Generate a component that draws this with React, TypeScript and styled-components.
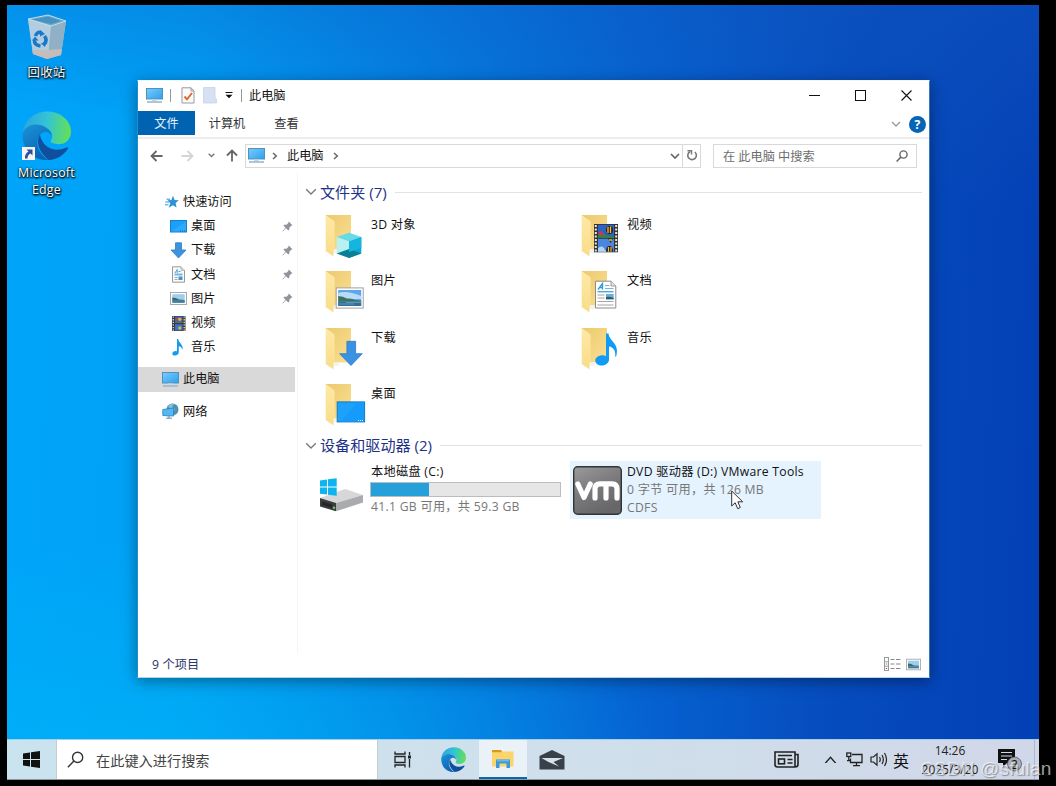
import React from 'react';
import styled, { createGlobalStyle } from 'styled-components';

const GlobalStyle = createGlobalStyle`
  * {
    box-sizing: border-box;
  }
  body {
    margin: 0;
    background: #000;
    font-family: 'Open Sans', 'Noto Sans CJK SC', sans-serif;
    font-size: 12.2px;
    color: #111;
  }
  svg {
    display: block;
    flex: none;
  }
`;

/* ---------- icons ---------- */

const BinIcon = () => (
  <svg width="42" height="46" viewBox="0 0 42 46">
    <path d="M2 5 L22 1 L40 7 L35 41 L21 45 L7 40Z" fill="#a9c9de" opacity=".9" />
    <path d="M2 5 L22 1 L40 7 L25 12Z" fill="#6fa9cc" />
    <path d="M6 5.5 L22 2.5 L35 7 L25 10Z" fill="#4593c2" />
    <path d="M2 5 L25 12 L22 44 L7 40Z" fill="#b2cddf" />
    <path d="M25 12 L40 7 L35 41 L22 44Z" fill="#8fb0c5" />
    <path d="M6.4 36 L22.5 36 L35.7 35 L35 41 L21 45 L7 40Z" fill="#c5bdbb" />
    <path d="M2 5 L22 1 L40 7 L25 12Z" fill="none" stroke="#d3e3ec" strokeWidth=".8" />
    <g fill="none" stroke="#1a78c8" strokeWidth="3.6">
      <path d="M9.5 22 Q11 17 15.5 19" />
      <path d="M18.5 22 Q21.5 26 18.5 30" />
      <path d="M14.5 32 Q8 31 8.5 26" />
    </g>
    <path d="M14 16 l5 4 -5 2.5z M21 27 l-2 6 -4 -3.5z M6 26.5 l3 -4 3.5 4z" fill="#1a78c8" />
  </svg>
);

const EdgeIcon = ({ size }: { size: number }) => (
  <svg width={size} height={size} viewBox="0 0 48 48">
    <defs>
      <linearGradient id="edgeTop" x1="0" y1=".4" x2="1" y2=".5">
        <stop offset="0" stopColor="#2aa5df" />
        <stop offset=".5" stopColor="#35c3d5" />
        <stop offset=".78" stopColor="#4fd58a" />
        <stop offset="1" stopColor="#65de58" />
      </linearGradient>
      <linearGradient id="edgeMid" x1="0" y1="0" x2=".5" y2="1">
        <stop offset="0" stopColor="#1b93d8" />
        <stop offset="1" stopColor="#0a63b4" />
      </linearGradient>
    </defs>
    <path
      d="M.5 22 C2 9 12 .5 25 .5 C38 .5 48 10 48 20 C48 28 42 32.500 36 32.500 C31 32.500 27.500 31 28 29.500 C31 26 30 20 24 17 C16 11 5 13 .5 22Z"
      fill="url(#edgeTop)"
    />
    <path
      d="M.5 22 C4 13 15 11 23 16 C27 18.500 29 21 29 24 C26 19.500 21 19 17 24 C12 32 17 43 26 48 C12 49 0 39 .5 22Z"
      fill="url(#edgeMid)"
    />
    <path
      d="M17.500 23 C14 29 15 39 26 48 C34 48 41 43 45 37 C45.500 35.500 44.500 35.500 43 36 C32 41 20 36 17.500 23Z"
      fill="#114f9e"
    />
  </svg>
);

const ShortcutArrow = () => (
  <svg width="13" height="13" viewBox="0 0 13 13">
    <rect width="13" height="13" fill="#f4f4f4" />
    <path d="M4.500 2.500 H10.500 V8.500 L8.500 6.500 C6.500 7.500 5.500 9 5.500 11.500 H3 C2.600 8.500 4 6 6.500 4.500Z" fill="#2b4f9c" />
  </svg>
);

const PcIcon = () => (
  <svg width="17" height="17" viewBox="0 0 17 17">
    <defs>
      <linearGradient id="pcScreen" x1="0" y1="0" x2="1" y2="1">
        <stop offset="0" stopColor="#7ccbfb" />
        <stop offset="1" stopColor="#2da0ee" />
      </linearGradient>
    </defs>
    <rect x=".5" y="1.500" width="16" height="10.500" fill="url(#pcScreen)" stroke="#4e93bd" />
    <rect x="6" y="12.500" width="5" height="2" fill="#c9d9e3" />
    <rect x="1" y="14.200" width="15" height="1.600" fill="#9db8ca" />
  </svg>
);

const CheckPageIcon = () => (
  <svg width="14" height="17" viewBox="0 0 14 17">
    <path d="M1 .8 H10 L13 4 V16 H1Z" fill="#fbfbfb" stroke="#999" />
    <path d="M10 .8 V4 H13" fill="none" stroke="#999" />
    <path d="M3.500 9.500 L6 12.300 L11 6" fill="none" stroke="#e0662a" strokeWidth="1.900" />
  </svg>
);

const BlankFolderIcon = () => (
  <svg width="14" height="17" viewBox="0 0 14 17">
    <path d="M.5 .5 H12 V11 L13.500 12 V16 H.5Z" fill="#d6e2f3" stroke="#c5d4ea" strokeWidth=".8" />
  </svg>
);

const StarIcon = () => (
  <svg width="14" height="14" viewBox="0 0 14 14">
    <path d="M8 .8 L9.600 4.900 L13.800 5.200 L10.600 8 L11.600 12.500 L7.900 10.200 L3.600 12.800 L5.300 8.300 L2.600 5.200 L6.400 4.900Z" fill="#2b93dc" />
    <path d="M1.500 4.200 H5 M.3 7 H4 M0 9.800 H3.500" stroke="#2b93dc" strokeWidth="1" />
  </svg>
);

const DesktopIcon = () => (
  <svg width="17" height="17" viewBox="0 0 17 17">
    <rect x=".5" y="2.500" width="16" height="11.500" fill="#18a0fb" stroke="#157fc9" />
    <path d="M1 13.500 L16 3.500 V13.500Z" fill="#3bb0ff" opacity=".6" />
    <path d="M10 13 H16" stroke="#0d6cb3" strokeDasharray="1 1" />
  </svg>
);

const DownIcon = () => (
  <svg width="17" height="17" viewBox="0 0 17 17">
    <path d="M5.500 .8 H11.500 V8 H16 L8.500 16 L1 8 H5.500Z" fill="#3f93de" stroke="#2c7fc8" strokeWidth=".8" />
  </svg>
);

const DocIcon = () => (
  <svg width="17" height="17" viewBox="0 0 17 17">
    <path d="M2.500 .8 H11 L14.500 4.300 V16.200 H2.500Z" fill="#fafafa" stroke="#999" />
    <path d="M11 .8 V4.300 H14.500" fill="#ddd" stroke="#aaa" strokeWidth=".8" />
    <path d="M5 7 L7.200 3.500 V7 M8.500 5.500 H10.500" stroke="#4ba6d8" fill="none" />
    <rect x="4.500" y="7.500" width="8" height="2" fill="#6cbbe5" />
    <path d="M4.500 11.500 H7.500 M4.500 13.500 H7.500" stroke="#aaa" />
    <rect x="8.500" y="10.500" width="4" height="3.500" fill="#4a92c6" />
  </svg>
);

const PhotoIcon = ({ width = 17, height = 17 }: { width?: number; height?: number }) => (
  <svg width={width} height={height} viewBox="0 0 17 17">
    <rect x=".5" y="2.500" width="16" height="12" fill="#fdfdfd" stroke="#a9a9a9" />
    <rect x="2.300" y="4.200" width="12.400" height="8.600" fill="#9dcdf0" />
    <path d="M2.300 7.500 Q6 7.500 9 9.500 L14.700 10 V10.800 H2.300Z" fill="#3b6c5a" />
    <rect x="2.300" y="10.800" width="12.400" height="2" fill="#3f7ba6" />
  </svg>
);

const FilmIcon = () => (
  <svg width="17" height="17" viewBox="0 0 17 17">
    <rect x="2" y="1" width="13.500" height="15" fill="#3a3a3a" />
    <path d="M3.300 1.500 V16 M14.200 1.500 V16" stroke="#ddd" strokeWidth="1.300" strokeDasharray="1.300 1.300" />
    <rect x="5" y="1.500" width="7.500" height="6.500" fill="#3e62b8" />
    <rect x="5" y="9.200" width="7.500" height="6.300" fill="#3f6fd0" />
    <path d="M5 5 L8 3 V6Z" fill="#c33f55" />
    <circle cx="9.800" cy="4.300" r="1.700" fill="#e2b52f" />
    <path d="M5.500 7.300 H12" stroke="#4c8b46" />
    <circle cx="9.800" cy="13" r="1.700" fill="#d6b238" />
  </svg>
);

const NoteIcon = () => (
  <svg width="17" height="17" viewBox="0 0 17 17">
    <path d="M7 0 H8.300 C8.600 4 13.800 5.500 12.500 11 C12 8.500 10.500 7.500 8.800 7.200 V13.300 C8.500 16 6 17 4 16.500 C1.700 16 1.800 12.900 4.500 12.200 Q6 11.700 7 12.300Z" fill="#149bea" />
  </svg>
);

const NetworkIcon = () => (
  <svg width="17" height="17" viewBox="0 0 17 17">
    <circle cx="10.500" cy="6.500" r="6" fill="#4f8fb2" />
    <path d="M6 3 Q9 0 12 1 L10 4 L13 6 L12 8 L8 6Z" fill="#86bfd6" />
    <path d="M.8 6.500 L11.500 5 V13 L.8 12.500Z" fill="#54b8f5" stroke="#2a80bd" strokeWidth=".8" />
    <path d="M5.500 13 H8 V14.600 H10 V16 H4 V14.800 H5.500Z" fill="#8fb3c9" />
  </svg>
);

const PinIcon = () => (
  <svg width="11" height="11" viewBox="0 0 11 11">
    <path d="M6.700 .5 L10.500 4.300 L9.300 4.700 L7.500 6.500 L7.200 8.800 L6.300 9.400 L4 7.200 L.8 10.500 L.4 10.200 L3.500 6.700 L1.500 4.600 L2.200 3.800 L4.500 3.700 L6.300 1.900Z" fill="#8c959d" />
  </svg>
);

const Chevron = ({ width = 10, color = '#555', d = 'M1 1 L5 5 L9 1', stroke = 1.3 }) => (
  <svg width={width} height={width * 0.6} viewBox="0 0 10 6">
    <path d={d} fill="none" stroke={color} strokeWidth={stroke} />
  </svg>
);

const CrumbArrow = () => (
  <svg width="6" height="8" viewBox="0 0 6 8">
    <path d="M1 1 L4.300 4 L1 7" fill="none" stroke="#666" strokeWidth="1.500" />
  </svg>
);

const NavArrow = ({ color, turn = 0 }: { color: string; turn?: number }) => (
  <svg width="14" height="14" viewBox="0 0 14 14">
    <path
      d="M12.500 7 H1.500 M6.500 2 L1.500 7 L6.500 12"
      transform={`rotate(${turn} 7 7)`}
      fill="none"
      stroke={color}
      strokeWidth="1.800"
    />
  </svg>
);

const SearchIcon = ({ size, color, width }: { size: number; color: string; width: number }) => (
  <svg width={size} height={size} viewBox="0 0 16 16">
    <circle cx="10" cy="6" r="4.800" fill="none" stroke={color} strokeWidth={width} />
    <path d="M6.500 9.500 L.8 15.200" stroke={color} strokeWidth={width} />
  </svg>
);

const RefreshIcon = () => (
  <svg width="12" height="13" viewBox="0 0 12 13">
    <path d="M8.800 3 A4.300 4.300 0 1 1 3.800 2.700" fill="none" stroke="#777" strokeWidth="1.600" />
    <path d="M1.500 1.700 H5.500 V5.500" fill="none" stroke="#777" strokeWidth="1.500" />
  </svg>
);

// Overlays share the 48px grid of the folder behind them.
const overlays: Record<string, React.ReactNode> = {
  cube: (
    <>
      <path d="M30 20.700 L42.300 25 L30 29.500 L17.700 25Z" fill="#65dbe6" />
      <path d="M17.700 25 L30 29.500 V46 L17.700 41.500Z" fill="#b9f0f2" />
      <path d="M42.300 25 L30 29.500 V46 L42.300 41.500Z" fill="#0aa6d4" />
      <path d="M17.700 41.500 L30 37 L42.300 41.500 L30 46Z" fill="#0a7f95" />
      <path d="M30 29.500 L42.300 25 V36 L30 40Z" fill="#16b5de" />
    </>
  ),
  photo: (
    <>
      <rect x="17.200" y="19.900" width="27" height="20.200" fill="#fff" stroke="#a0a0a0" />
      <rect x="19.200" y="22" width="23" height="16" fill="#5da6ec" />
      <path d="M19.200 25 Q27 22 42.200 28 V31 H19.200Z" fill="#b8dcf8" />
      <path d="M19.200 28 Q24 28 28 30.500 Q34 30 36 32 L42.200 32.500 V33.500 H19.200Z" fill="#3c7558" />
      <rect x="19.200" y="33.500" width="23" height="4.500" fill="#346e98" />
      <path d="M20 36 H35 M27 34.500 H42" stroke="#75a9c8" strokeWidth=".7" />
    </>
  ),
  down: <path d="M27.900 16.300 H36.600 V28.700 H43.300 L32 40.500 L20.600 28.700 H27.900Z" fill="#3b92e3" stroke="#2b7cc9" strokeWidth=".8" />,
  desktop: (
    <>
      <rect x="18.200" y="20.900" width="27.400" height="20" fill="#1ca2fc" stroke="#1678bd" />
      <path d="M22 40.400 L38 21.400 H45 V40.400Z" fill="#149bfb" />
      <path d="M39 39.500 H45" stroke="#d9f0ff" strokeDasharray="1 1" />
    </>
  ),
  film: (
    <>
      <rect x="19" y="12" width="24" height="28.300" fill="#333" />
      <path d="M20.800 13 V40 M41.200 13 V40" stroke="#e8e8e8" strokeWidth="2" strokeDasharray="2 1.500" />
      <rect x="23" y="12.800" width="16" height="13" fill="#2c62c6" />
      <rect x="23" y="26.800" width="16" height="13" fill="#4a86e2" />
      <path d="M23 23 L26 20 L31 23.500 L39 24 V25.800 H23Z" fill="#2f8a3c" />
      <path d="M23 21 L26 19 L30 23 H24Z" fill="#cf3750" />
      <ellipse cx="34.500" cy="18" rx="3.500" ry="4" fill="#2b1c28" />
      <path d="M33 15 V21 M35.500 14.500 V21" stroke="#f3c51d" strokeWidth="1.300" />
      <path d="M33 26.500 H38 L35.500 31Z" fill="#2e2029" />
      <path d="M34 28 H37" stroke="#edc323" strokeWidth="1.500" />
      <path d="M23 36 Q28 32 30 38 L33 39.800 H23Z" fill="#b5d4ee" />
      <path d="M31 39.800 Q31 34 34.500 34 Q38 34 38 39.800Z" fill="#2b1c28" />
      <path d="M33.500 35 V39.800 M36 35 V39.800" stroke="#f3c51d" strokeWidth="1.200" />
    </>
  ),
  doc: (
    <>
      <path d="M20.500 13.200 H36 L40.800 18 V40 H20.500Z" fill="#fff" stroke="#8c8c8c" />
      <path d="M36 13.200 V18 H40.800" fill="#e4e4e4" stroke="#8c8c8c" strokeWidth=".8" />
      <path d="M23 21.500 L27.500 15.500 V21.500 M24.800 19.500 H27.500" fill="none" stroke="#3b9bd1" strokeWidth="1.400" />
      <path d="M30 17.500 H34.500 M30 20.500 H38.500" stroke="#6dbbe3" strokeWidth="1.200" />
      <path d="M22.500 23.700 H38.500" stroke="#51a9dc" strokeWidth="1.400" />
      <path d="M22.500 27 H29.500 M22.500 30 H29.500 M22.500 33.500 H38.500 M22.500 37 H38.500" stroke="#a6a6a6" />
      <rect x="31" y="26" width="7.700" height="5.300" fill="#69aede" />
      <path d="M31 29 Q34 28 38.700 30 V31.300 H31Z" fill="#2e5f60" />
    </>
  ),
  note: (
    <path
      d="M31 8.500 H33.500 C34 16 44.500 18 41.500 30.500 L40 32 C41.500 26 38 22 34 21.500 V35 C33.700 38.500 30 40.500 26.500 40.500 C22.500 40.500 20.300 38 20.300 35.500 C20.300 32.500 24 30.300 27.500 30.300 C29 30.300 30.200 30.600 31 31.200Z"
      fill="#129bf4"
    />
  ),
};

const FolderIcon = ({ kind }: { kind: string }) => (
  <svg width="48" height="48" viewBox="0 0 48 48">
    <defs>
      <linearGradient id="folderBack" x1="0" y1="0" x2="1" y2="1">
        <stop offset="0" stopColor="#ebc96d" />
        <stop offset="1" stopColor="#fbdf92" />
      </linearGradient>
      <linearGradient id="folderFlap" x1="0" y1="0" x2="0" y2="1">
        <stop offset="0" stopColor="#ffe9a6" />
        <stop offset="1" stopColor="#f8dc89" />
      </linearGradient>
    </defs>
    <path d="M6.700 3 H32 V37.500 H15Z" fill="url(#folderBack)" />
    <path d="M12 37.500 H20 V41 H14Z" fill="#f2f2f2" />
    <path d="M6.700 3 L14.500 8.500 C15.500 9.500 15.700 10 15.700 11 V36.500 L14.500 38 V43.500 L13.800 44 L6.700 39Z" fill="url(#folderFlap)" />
    {overlays[kind]}
  </svg>
);

const DriveIcon = () => (
  <svg width="48" height="48" viewBox="0 0 48 48">
    <path d="M1 32 L26 23 L44 29 L17 37Z" fill="#d6d7d9" />
    <path d="M17 37 L44 29 V36.500 L17 45.300Z" fill="#a9abae" />
    <path d="M1 32 L17 37 V45.300 L1 40.500Z" fill="#3a3b3d" />
    <path d="M3 35.500 L13 38.500 V42 L3 39Z" fill="#242526" />
    <circle cx="15" cy="41.800" r="1.200" fill="#5fd35c" />
    <path d="M1 14.500 L8 13.500 V20.500 H1Z M9 13.300 L17.700 12.200 V20.500 H9Z M1 21.500 H8 V28.500 L1 27.700Z M9 21.500 H17.700 V29.800 L9 28.700Z" fill="#0cb4f0" />
  </svg>
);

const VmIcon = () => (
  <svg width="49" height="49" viewBox="0 0 49 49">
    <defs>
      <linearGradient id="vmPlate" x1="0" y1="0" x2=".5" y2="1">
        <stop offset="0" stopColor="#9b9b9d" />
        <stop offset=".5" stopColor="#7c7c7e" />
        <stop offset="1" stopColor="#676769" />
      </linearGradient>
    </defs>
    <rect x=".7" y=".7" width="47.600" height="47.600" rx="4" fill="url(#vmPlate)" stroke="#343436" strokeWidth="1.400" />
    <path
      d="M4.800 18 L11 31.500 L17.300 18 M22 32 V23 Q22 17.800 27 17.800 H39 Q44 17.800 44 23 V32 M33 18.500 V32"
      fill="none"
      stroke="#fff"
      strokeWidth="5.200"
      strokeLinecap="round"
      strokeLinejoin="round"
    />
  </svg>
);

const WindowsIcon = () => (
  <svg width="17" height="17" viewBox="0 0 17 17">
    <path d="M0 2.400 L7 1.400 V8 H0Z M8 1.200 L17 0 V8 H8Z M0 9 H7 V15.600 L0 14.600Z M8 9 H17 V17 L8 15.800Z" fill="#111" />
  </svg>
);

const TaskViewIcon = () => (
  <svg width="17" height="17" viewBox="0 0 17 17">
    <g fill="none" stroke="#222" strokeWidth="1.300">
      <path d="M1 .5 V3 H11 V.5 M1 16.500 V14 H11 V16.500 M1 5.500 H11 V11.500 H1Z M15.500 1 V4 M15.500 8 V16.500" />
    </g>
    <rect x="14" y="4.500" width="3" height="3" fill="#222" />
  </svg>
);

const ExplorerIcon = () => (
  <svg width="22" height="20" viewBox="0 0 22 20">
    <path d="M0 1 H9 L10.500 2.500 H21.500 V17.500 H0Z" fill="#fcd56a" />
    <path d="M0 1 H9 L10 3.300 H0Z" fill="#d99a17" />
    <path d="M4 10.500 H18 V19 H14.500 V14.500 H7.500 V19 H4Z" fill="#3d97d9" />
    <path d="M4 10.500 H18 L16.500 12.500 H5.500Z" fill="#6bb6ea" />
  </svg>
);

const MailIcon = () => (
  <svg width="26" height="20" viewBox="0 0 26 20">
    <path d="M.5 6 L13 0 L25.500 6 V19.500 H.5Z" fill="#38414a" />
    <path d="M2.500 8 H24 L14.500 12 L20 16.500 L9.500 12Z" fill="#d7e3ec" />
  </svg>
);

const NewsIcon = () => (
  <svg width="25" height="17" viewBox="0 0 25 17">
    <g fill="none" stroke="#222" strokeWidth="1.600">
      <path d="M1 1 H21 V16 H3.500 Q1 16 1 13.500Z M21 3.500 H24 V13.500 Q24 16 21 16" />
      <path d="M4 4.500 H18 M13.500 8.500 H18.500 M13.500 12 H18.500" />
      <rect x="4.500" y="8" width="6" height="4.800" />
    </g>
  </svg>
);

const TrayNetIcon = () => (
  <svg width="17" height="15" viewBox="0 0 17 15">
    <g fill="none" stroke="#222" strokeWidth="1.300">
      <path d="M6 2.500 H16 V10.500 H4.500 V6.500 M10.500 10.500 V13.500 M7 13.700 H14" />
      <rect x=".8" y="1" width="4" height="3.500" />
      <path d="M2.800 4.500 V8.500 M1 8.700 H4" />
    </g>
  </svg>
);

const VolumeIcon = () => (
  <svg width="18" height="15" viewBox="0 0 18 15">
    <g fill="none" stroke="#222" strokeWidth="1.200">
      <path d="M1 5 H3.500 L7 1.800 V13.200 L3.500 10 H1Z M9.500 5 Q11 7.500 9.500 10 M12 3 Q14.700 7.500 12 12 M14.500 1 Q18.500 7.500 14.500 14" />
    </g>
  </svg>
);

const ActionIcon = () => (
  <svg width="24" height="24" viewBox="0 0 24 24">
    <path d="M0 1 H17 V15 H9 L5 19 V15 H0Z" fill="#111" />
    <path d="M3 4.500 H14 M3 8 H14 M3 11.500 H9" stroke="#cfd8e8" strokeWidth="1.200" />
    <circle cx="16.500" cy="16" r="7" fill="#a8adb8" stroke="#555b66" strokeWidth=".8" />
    <text x="13" y="20.500" fontSize="12" fill="#111">
      2
    </text>
  </svg>
);

const DetailsViewIcon = () => (
  <svg width="17" height="14" viewBox="0 0 17 14">
    <rect x=".5" y=".5" width="4" height="13" fill="#fff" stroke="#999" />
    <path d="M.5 4.800 H4.500 M.5 9.200 H4.500" stroke="#999" />
    <path d="M1.800 7 H3.200" stroke="#4b87c9" />
    <path d="M1.800 11.500 H3.200" stroke="#c33" />
    <path d="M6.500 2.500 H10.500 M12 2.500 H16.500 M6.500 7 H10.500 M12 7 H16.500 M6.500 11.500 H10.500 M12 11.500 H16.500" stroke="#888" />
  </svg>
);

const CursorIcon = () => (
  <svg width="13" height="20" viewBox="0 0 13 20">
    <path d="M.7 1 V16 L4.200 12.800 L6.700 18.700 L9.300 17.500 L6.800 11.800 H11.700Z" fill="#fff" stroke="#333" strokeWidth="1" />
  </svg>
);

/* ---------- layout ---------- */

const Screen = styled.div`
  position: relative;
  width: 1056px;
  height: 786px;
  padding: 5px 17px 7px 7px;
  overflow: hidden;
  background: #000;
`;

const Desktop = styled.div`
  position: relative;
  display: flex;
  flex-direction: column;
  width: 1032px;
  height: 774px;
  background:
    radial-gradient(ellipse 560px 240px at 10% 100%, rgba(0, 180, 245, 0.7), rgba(0, 180, 245, 0)),
    linear-gradient(186deg, rgba(16, 84, 190, 0.5), rgba(0, 90, 200, 0) 24%),
    linear-gradient(92deg, #00a5fa 0%, #00a0f5 18%, #0385e6 38%, #0565d3 60%, #064cbe 80%, #033fb5 100%);
`;

const Shortcuts = styled.div`
  flex: 1;
  display: flex;
  flex-direction: column;
  align-items: center;
  width: 79px;
  padding-top: 9px;
`;

const Shortcut = styled.div<{ $gap: number }>`
  display: flex;
  flex-direction: column;
  align-items: center;
  margin-bottom: ${({ $gap }) => $gap}px;
  color: #fff;
  font-size: 12.4px;
  letter-spacing: 0.25px;
  line-height: 17px;
  text-align: center;
  text-shadow: 0 1px 2px #000, 1px 1px 2px #000, 0 0 2px rgba(0, 0, 0, 0.7);
  & > span {
    margin-top: 4px;
  }
`;

const IconWithBadge = styled.div`
  position: relative;
  & > svg + svg {
    position: absolute;
    left: 0;
    bottom: 0;
  }
`;

const Window = styled.div`
  position: absolute;
  left: 130px;
  top: 75px;
  display: flex;
  flex-direction: column;
  width: 793px;
  height: 598px;
  background: #fff;
  border: 1px solid #1d8fd4;
  border-top-color: #eef6fc;
  border-right-color: #3c78bd;
  border-bottom-color: #b5d2ea;
  box-shadow: 0 3px 14px rgba(0, 0, 0, 0.4);
`;

const TitleBar = styled.div`
  display: flex;
  align-items: center;
  height: 30px;
  padding: 0 0 2px 8px;
`;

const TitleMark = styled.i<{ $left: number; $right: number }>`
  width: 1px;
  height: 13px;
  margin: 0 ${({ $right }) => $right}px 0 ${({ $left }) => $left}px;
  background: #999;
`;

const QuickTools = styled.div`
  display: flex;
  align-items: center;
  gap: 8px;
`;

const WindowButtons = styled.div`
  display: flex;
  margin-left: auto;
`;

const WindowButton = styled.div`
  display: flex;
  align-items: center;
  justify-content: center;
  width: 46px;
  height: 28px;
`;

const TabBar = styled.div`
  display: flex;
  align-items: center;
  height: 28px;
  padding: 0 3px 3px 0;
  border-bottom: 2px solid #ececec;
`;

const Tab = styled.div<{ $active?: boolean; $width: number }>`
  width: ${({ $width }) => $width}px;
  height: 24px;
  line-height: 26px;
  text-align: center;
  color: ${({ $active }) => ($active ? '#e6f2fc' : '#333')};
  background: ${({ $active }) => ($active ? '#0063b1' : 'none')};
`;

const TabTools = styled.div`
  display: flex;
  align-items: center;
  gap: 8px;
  margin: 3px 0 0 auto;
`;

const HelpBadge = styled.div`
  width: 17px;
  height: 17px;
  border-radius: 50%;
  background: #0765b8;
  color: #fff;
  font-weight: 700;
  line-height: 17px;
  text-align: center;
`;

const AddressRow = styled.div`
  display: flex;
  align-items: center;
  height: 34px;
  padding: 0 12px 1px;
`;

const NavButtons = styled.div`
  display: flex;
  align-items: center;
  width: 95px;
  & > :nth-child(2) {
    margin-left: 16px;
  }
  & > :nth-child(3) {
    margin-left: 14px;
  }
  & > :nth-child(4) {
    margin-left: 10px;
  }
`;

const AddressBox = styled.div`
  display: flex;
  align-items: center;
  width: 456px;
  height: 24px;
  padding-left: 2px;
  border: 1px solid #d9d9d9;
  & > span {
    margin: -1px 9px 0;
  }
  & > svg + svg {
    margin-left: 7px;
  }
`;

const AddressTools = styled.div`
  display: flex;
  align-items: center;
  height: 100%;
  margin-left: auto;
`;

const RefreshCell = styled.div`
  display: flex;
  align-items: center;
  justify-content: center;
  width: 18px;
  height: 100%;
  margin-left: 2px;
  border-left: 1px solid #d9d9d9;
`;

const SearchBox = styled.div`
  display: flex;
  align-items: center;
  justify-content: space-between;
  width: 204px;
  height: 24px;
  margin-left: 12px;
  padding: 0 8px 0 9px;
  border: 1px solid #d9d9d9;
  color: #6d6d6d;
`;

const Body = styled.div`
  flex: 1;
  display: flex;
  min-height: 0;
`;

const Sidebar = styled.div`
  width: 160px;
  padding-top: 17px;
  border-right: 1px solid #f5f5f5;
`;

const SideRow = styled.div<{ $indent: number; $top?: number; $active?: boolean }>`
  display: flex;
  align-items: center;
  gap: 4px;
  width: 157px;
  height: 24.2px;
  margin-top: ${({ $top = 0 }) => $top}px;
  padding: 0 2px 0 ${({ $indent }) => $indent}px;
  background: ${({ $active }) => ($active ? '#d9d9d9' : 'none')};
  line-height: 24px;
  & > svg:nth-child(3) {
    margin-left: auto;
  }
`;

const Content = styled.div`
  flex: 1;
  padding: 8px 7px 0 7px;
`;

const GroupHeader = styled.div`
  display: flex;
  align-items: center;
  gap: 3px;
  height: 22px;
  color: #1e3287;
  font-size: 15.1px;
  line-height: 22px;
  white-space: nowrap;
  &::after {
    content: '';
    flex: 1;
    height: 1px;
    margin-left: 5px;
    background: #e2e2e2;
  }
`;

const TileGrid = styled.div<{ $top: number; $bottom: number; $row: number }>`
  display: grid;
  grid-template-columns: 251px 251px;
  grid-auto-rows: ${({ $row }) => $row}px;
  column-gap: 5px;
  margin: ${({ $top, $bottom }) => `${$top}px 0 ${$bottom}px`};
  padding-left: 9px;
`;

const Tile = styled.div<{ $hover?: boolean; $dense?: boolean }>`
  position: relative;
  display: flex;
  gap: 5px;
  padding: ${({ $dense }) => ($dense ? '5px 3px 0' : '4px 3px 0')};
  background: ${({ $hover }) => ($hover ? '#e5f3ff' : 'none')};
  letter-spacing: 0.28px;
  line-height: 18px;
  white-space: nowrap;
`;

const TileIcon = styled.div<{ $inset?: number }>`
  width: 49px;
  padding-left: ${({ $inset = 0 }) => $inset}px;
`;

const TileText = styled.div<{ $top: number }>`
  display: flex;
  flex-direction: column;
  margin-top: ${({ $top }) => $top}px;
`;

const Muted = styled.span`
  color: #777;
`;

const UsageBar = styled.div`
  width: 191px;
  height: 15px;
  margin: 1px 0 1px -1px;
  border: 1px solid #bcbcbc;
  background: #e6e6e6;
`;

const UsageFill = styled.div`
  height: 100%;
  background: #26a0da;
`;

const Pointer = styled.div`
  position: absolute;
  left: 161px;
  top: 29px;
`;

const StatusBar = styled.div`
  display: flex;
  align-items: center;
  justify-content: space-between;
  height: 24px;
  padding: 0 8px 2px 14px;
  color: #2c3566;
  letter-spacing: 0.15px;
`;

const StatusViews = styled.div`
  display: flex;
  align-items: center;
  gap: 5px;
`;

const Taskbar = styled.div`
  display: flex;
  align-items: center;
  height: 41px;
  margin-bottom: -1px;
  border-top: 1px solid #a5cdec;
  border-bottom: 1px solid #8f979e;
  background: linear-gradient(90deg, #c9e3ef, #cfe0ec 50%, #d0d7e8);
`;

const TaskButton = styled.div<{ $width: number; $active?: boolean }>`
  display: flex;
  align-items: center;
  justify-content: center;
  width: ${({ $width }) => $width}px;
  height: 100%;
  background: ${({ $active }) => ($active ? '#eaf1f7' : 'none')};
  border-bottom: ${({ $active }) => ($active ? '2px solid #0a68b0' : 'none')};
`;

const TaskSearch = styled.div`
  display: flex;
  align-items: center;
  gap: 12px;
  width: 322px;
  height: 100%;
  padding-left: 10px;
  background: #fff;
  border-left: 1px solid #c5cdd2;
  border-right: 1px solid #c5cdd2;
  color: #444;
  font-size: 14.2px;
`;

const Tray = styled.div`
  display: flex;
  align-items: center;
  height: 100%;
  margin-left: auto;
`;

const TrayItem = styled.div<{ $right: number }>`
  margin-right: ${({ $right }) => $right}px;
  font-size: 16px;
`;

const Clock = styled.div`
  width: 62px;
  margin-right: 17px;
  color: #222;
  font-size: 12px;
  line-height: 19px;
  text-align: center;
`;

const ShowDesktop = styled.div`
  width: 5px;
  height: 100%;
  margin-left: 12px;
  border-left: 1px solid #aeb9cc;
`;

const Watermark = styled.div`
  position: absolute;
  left: 920px;
  top: 757px;
  color: rgba(255, 255, 255, 0.62);
  font-family: 'Liberation Sans', sans-serif;
  font-size: 19px;
  line-height: 24px;
  letter-spacing: 0.2px;
  text-shadow: 1px 1px 1px rgba(0, 0, 0, 0.35);
  white-space: nowrap;
`;

/* ---------- data ---------- */

const quickLinks = [
  { label: '桌面', icon: <DesktopIcon />, pinned: true },
  { label: '下载', icon: <DownIcon />, pinned: true },
  { label: '文档', icon: <DocIcon />, pinned: true },
  { label: '图片', icon: <PhotoIcon />, pinned: true },
  { label: '视频', icon: <FilmIcon />, pinned: false },
  { label: '音乐', icon: <NoteIcon />, pinned: false },
];

const folders = [
  { label: '3D 对象', kind: 'cube' },
  { label: '视频', kind: 'film' },
  { label: '图片', kind: 'photo' },
  { label: '文档', kind: 'doc' },
  { label: '下载', kind: 'down' },
  { label: '音乐', kind: 'note' },
  { label: '桌面', kind: 'desktop' },
];

const drive = { free: 41.1, total: 59.3 };

const ExplorerWindow = () => (
  <Window>
    <TitleBar>
      <PcIcon />
      <TitleMark $left={7} $right={10} />
      <QuickTools>
        <CheckPageIcon />
        <BlankFolderIcon />
        <svg width="8" height="8" viewBox="0 0 8 8">
          <path d="M.5 1.500 H7.500" stroke="#111" />
          <path d="M.5 3.700 H7.500 L4 7.300Z" fill="#111" />
        </svg>
      </QuickTools>
      <TitleMark $left={8} $right={7} />
      <span>此电脑</span>
      <WindowButtons>
        <WindowButton>
          <svg width="11" height="11" viewBox="0 0 11 11">
            <path d="M0 5.500 H11" stroke="#111" />
          </svg>
        </WindowButton>
        <WindowButton>
          <svg width="11" height="11" viewBox="0 0 11 11">
            <rect x=".5" y=".5" width="10" height="10" fill="none" stroke="#111" />
          </svg>
        </WindowButton>
        <WindowButton>
          <svg width="11" height="11" viewBox="0 0 11 11">
            <path d="M.5 .5 L10.500 10.500 M10.500 .5 L.5 10.500" stroke="#111" strokeWidth="1.100" />
          </svg>
        </WindowButton>
      </WindowButtons>
    </TitleBar>
    <TabBar>
      <Tab $width={57} $active>
        文件
      </Tab>
      <Tab $width={64}>计算机</Tab>
      <Tab $width={55}>查看</Tab>
      <TabTools>
        <Chevron width={10} color="#999" />
        <HelpBadge>?</HelpBadge>
      </TabTools>
    </TabBar>
    <AddressRow>
      <NavButtons>
        <NavArrow color="#666" />
        <NavArrow color="#d5d5d5" turn={180} />
        <Chevron width={7} color="#777" stroke={2} />
        <NavArrow color="#666" turn={90} />
      </NavButtons>
      <AddressBox>
        <PcIcon />
        <CrumbArrow />
        <span>此电脑</span>
        <CrumbArrow />
        <AddressTools>
          <Chevron width={10} color="#666" stroke={1.7} />
          <RefreshCell>
            <RefreshIcon />
          </RefreshCell>
        </AddressTools>
      </AddressBox>
      <SearchBox>
        在 此电脑 中搜索
        <SearchIcon size={12} color="#666" width={1.9} />
      </SearchBox>
    </AddressRow>
    <Body>
      <Sidebar>
        <SideRow $indent={27}>
          <StarIcon />
          快速访问
        </SideRow>
        {quickLinks.map(({ label, icon, pinned }) => (
          <SideRow key={label} $indent={32}>
            {icon}
            <span>{label}</span>
            {pinned && <PinIcon />}
          </SideRow>
        ))}
        <SideRow $indent={24} $top={8} $active>
          <PcIcon />
          此电脑
        </SideRow>
        <SideRow $indent={24} $top={8}>
          <NetworkIcon />
          网络
        </SideRow>
      </Sidebar>
      <Content>
        <GroupHeader>
          <Chevron width={12} color="#777" stroke={1.1} />
          文件夹 (7)
        </GroupHeader>
        <TileGrid $top={5} $bottom={1} $row={56.3}>
          {folders.map(({ label, kind }) => (
            <Tile key={label}>
              <TileIcon $inset={2}>
                <FolderIcon kind={kind} />
              </TileIcon>
              <TileText $top={4}>{label}</TileText>
            </Tile>
          ))}
        </TileGrid>
        <GroupHeader>
          <Chevron width={12} color="#777" stroke={1.1} />
          设备和驱动器 (2)
        </GroupHeader>
        <TileGrid $top={5} $bottom={0} $row={58}>
          <Tile $dense>
            <TileIcon $inset={2}>
              <DriveIcon />
            </TileIcon>
            <TileText $top={-3}>
              <span>本地磁盘 (C:)</span>
              <UsageBar>
                <UsageFill style={{ width: `${(1 - drive.free / drive.total) * 100}%` }} />
              </UsageBar>
              <Muted>
                {drive.free} GB 可用，共 {drive.total} GB
              </Muted>
            </TileText>
          </Tile>
          <Tile $dense $hover>
            <TileIcon>
              <VmIcon />
            </TileIcon>
            <TileText $top={-3}>
              <span>DVD 驱动器 (D:) VMware Tools</span>
              <Muted>0 字节 可用，共 126 MB</Muted>
              <Muted>CDFS</Muted>
            </TileText>
            <Pointer>
              <CursorIcon />
            </Pointer>
          </Tile>
        </TileGrid>
      </Content>
    </Body>
    <StatusBar>
      <span>9 个项目</span>
      <StatusViews>
        <DetailsViewIcon />
        <PhotoIcon width={15} height={15} />
      </StatusViews>
    </StatusBar>
  </Window>
);

const App: React.FC = () => {
  return (
    <>
      <GlobalStyle />
      <Screen>
        <Desktop>
          <Shortcuts>
            <Shortcut $gap={30}>
              <BinIcon />
              <span>回收站</span>
            </Shortcut>
            <Shortcut $gap={0}>
              <IconWithBadge>
                <EdgeIcon size={49} />
                <ShortcutArrow />
              </IconWithBadge>
              <span>
                Microsoft
                <br />
                Edge
              </span>
            </Shortcut>
          </Shortcuts>
          <ExplorerWindow />
          <Taskbar>
            <TaskButton $width={49}>
              <WindowsIcon />
            </TaskButton>
            <TaskSearch>
              <SearchIcon size={17} color="#333" width={1.3} />
              在此键入进行搜索
            </TaskSearch>
            <TaskButton $width={49}>
              <TaskViewIcon />
            </TaskButton>
            <TaskButton $width={52}>
              <EdgeIcon size={25} />
            </TaskButton>
            <TaskButton $width={48} $active>
              <ExplorerIcon />
            </TaskButton>
            <TaskButton $width={50}>
              <MailIcon />
            </TaskButton>
            <Tray>
              <TrayItem $right={25}>
                <NewsIcon />
              </TrayItem>
              <TrayItem $right={9}>
                <Chevron width={13} color="#222" d="M1 5.500 L5 1 L9 5.500" stroke={1.1} />
              </TrayItem>
              <TrayItem $right={7}>
                <TrayNetIcon />
              </TrayItem>
              <TrayItem $right={5}>
                <VolumeIcon />
              </TrayItem>
              <TrayItem $right={10}>英</TrayItem>
              <Clock>
                14:26
                <br />
                2025/3/20
              </Clock>
              <ActionIcon />
              <ShowDesktop />
            </Tray>
          </Taskbar>
        </Desktop>
        <Watermark>CSDN @sfulan</Watermark>
      </Screen>
    </>
  );
};

export default App;
